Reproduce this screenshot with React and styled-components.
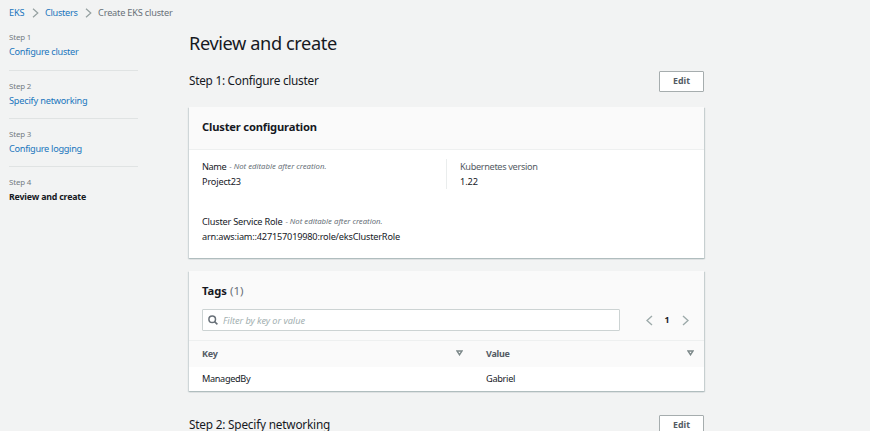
import React from 'react';
import styled, { createGlobalStyle } from 'styled-components';

const Global = createGlobalStyle`
  * { box-sizing: border-box; }
  html, body { margin: 0; background: #f2f3f3; overflow: hidden; }
  body { font-family: "Noto Sans", "Open Sans", sans-serif; font-size: 9px; color: #16191f; }
  a { text-decoration: none; }
`;

const Page = styled.div`
  height: 431px;
  overflow: hidden;
`;

const Text = styled.span`
  display: block;
  white-space: nowrap;
  font-size: ${(p) => p.$size || 9.2}px;
  line-height: ${(p) => p.$line || 15}px;
  letter-spacing: ${(p) => p.$track || 0}px;
  font-weight: ${(p) => (p.$bold ? 700 : 400)};
  font-style: ${(p) => (p.$italic ? 'italic' : 'normal')};
  color: ${(p) => p.$color || '#16191f'};
`;

const Breadcrumbs = styled.nav`
  display: flex;
  align-items: center;
  height: 25px;
  padding-left: 9px;
`;

const Separator = styled.svg`
  width: 7px;
  height: 10px;
  margin: 0 6.5px 0 7px;
  fill: none;
  stroke: #95a0a0;
  stroke-width: 1.2;
`;

const Body = styled.div`
  display: flex;
  align-items: flex-start;
`;

const Sidebar = styled.ol`
  list-style: none;
  width: 129px;
  margin: 5px 0 0 9px;
  padding: 0;
`;

const StepItem = styled.li`
  height: ${(p) => (p.$first ? 41 : 48)}px;
  padding-top: ${(p) => (p.$first ? 0 : 8)}px;
  border-bottom: 1px solid ${(p) => (p.$last ? 'transparent' : '#e0e3e3')};
`;

const Main = styled.main`
  width: 515px;
  margin: 5px 0 0 51px;
`;

const Title = styled.h1`
  margin: 0;
`;

const SectionHeader = styled.div`
  display: flex;
  align-items: flex-start;
  justify-content: space-between;
  height: 21px;
  margin-top: ${(p) => p.$gap}px;
`;

const Button = styled.button`
  display: flex;
  align-items: center;
  justify-content: center;
  width: 45px;
  height: 21px;
  padding: 0;
  font-family: inherit;
  background: #fff;
  border: 1px solid #a6adae;
  border-radius: 1px;
`;

const Panel = styled.section`
  height: ${(p) => p.$height}px;
  margin-top: ${(p) => p.$gap}px;
  background: #fff;
  box-shadow: 0 1px 1px #aab7b8aa, 1px 1px 1px #aab7b888, -1px 1px 1px #aab7b866;
`;

const PanelHeader = styled.header`
  display: flex;
  align-items: center;
  height: 43px;
  padding: 0 13px 3px;
  background: #fafafa;
  border-bottom: 1px solid #eef0f0;
`;

const Fields = styled.div`
  display: grid;
  grid-template-columns: 257px 1fr;
  row-gap: 25px;
  padding-top: 9px;
`;

const Field = styled.div`
  height: 30px;
  padding-left: 13px;
  border-left: 1px solid ${(p) => (p.$divided ? '#eaeded' : 'transparent')};
  margin-left: ${(p) => (p.$divided ? 0 : -1)}px;
`;

const Inline = styled.div`
  display: flex;
  align-items: center;
  gap: 3px;
`;

const TableTop = styled.div`
  height: 70px;
  padding: 12px 13px 0;
  background: #fafafa;
  border-bottom: 1px solid #eef0f0;
`;

const FilterRow = styled.div`
  display: flex;
  align-items: center;
  margin-top: 11px;
`;

const SearchBox = styled.div`
  display: flex;
  align-items: center;
  gap: 5px;
  width: 418px;
  height: 22px;
  padding-left: 5px;
  background: #fff;
  border: 1px solid #ccd3d3;
  border-radius: 1px;
`;

const Pager = styled.div`
  display: flex;
  align-items: center;
  gap: 12px;
  margin-left: 25.5px;
`;

const Icon = styled.svg`
  display: block;
  flex: none;
  fill: none;
  stroke: ${(p) => p.$stroke};
  stroke-width: ${(p) => p.$weight};
`;

const Row = styled.div`
  display: grid;
  grid-template-columns: 284px 1fr;
  align-items: center;
  height: ${(p) => (p.$head ? 26 : 24)}px;
  padding-bottom: ${(p) => (p.$head ? 2 : 1)}px;
  background: ${(p) => (p.$head ? '#fafafa' : '#fff')};
`;

const Cell = styled.div`
  display: flex;
  align-items: center;
  justify-content: space-between;
  padding: 0 10px 0 13px;
`;

const Chevron = ({ left }) => (
  <Icon width="7" height="11" viewBox="0 0 7 11" $stroke="#9daaaa" $weight={1.4}>
    <path d={left ? 'M6 1 1 5.5 6 10' : 'M1 1 6 5.5 1 10'} />
  </Icon>
);

const SortIcon = () => (
  <Icon width="7" height="6" viewBox="0 0 7 6" $stroke="#7c8889" $weight={1.4}>
    <path d="M1 1H6L3.5 4.8Z" />
  </Icon>
);

const LINK = '#1a76bd';

const Crumb = () => (
  <Separator viewBox="0 0 7 10"><path d="M1 .8 5.8 5 1 9.2" /></Separator>
);

const STEPS = [
  ['Configure cluster', -0.28],
  ['Specify networking', -0.21],
  ['Configure logging', -0.3],
  ['Review and create', -0.18],
];

export default function App() {
  return (
    <Page>
      <Global />
      <Breadcrumbs>
        <Text as="a" $color={LINK} $track={-0.1}>EKS</Text>
        <Crumb />
        <Text as="a" $color={LINK} $track={-0.3}>Clusters</Text>
        <Crumb />
        <Text $color="#687078" $track={-0.2}>Create EKS cluster</Text>
      </Breadcrumbs>
      <Body>
        <Sidebar>
          {STEPS.map(([name, track], i) => (
            <StepItem key={name} $first={i === 0} $last={i === 3}>
              <Text $size={7.9} $line={14} $track={-0.15} $color="#737b82">Step {i + 1}</Text>
              {i === 3
                ? <Text $bold $line={16} $size={8.8} $track={track}>{name}</Text>
                : <Text as="a" $line={16} $color={LINK} $track={track}>{name}</Text>}
            </StepItem>
          ))}
        </Sidebar>
        <Main>
          <Title><Text $size={18.2} $line={26} $track={-0.4}>Review and create</Text></Title>
          <SectionHeader $gap={15}>
            <Text $size={11.8} $line={19} $track={-0.26}>Step 1: Configure cluster</Text>
            <Button><Text $bold $size={8.8} $color="#545b64">Edit</Text></Button>
          </SectionHeader>
          <Panel $height={151} $gap={15}>
            <PanelHeader><Text $bold $size={11.2} $track={-0.19}>Cluster configuration</Text></PanelHeader>
            <Fields>
              <Field>
                <Inline>
                  <Text $track={-0.4}>Name</Text>
                  <Text $italic $size={7.75} $color="#687078">- Not editable after creation.</Text>
                </Inline>
                <Text $track={-0.18}>Project23</Text>
              </Field>
              <Field $divided>
                <Text $track={-0.35} $color="#545b64">Kubernetes version</Text>
                <Text $track={-0.1}>1.22</Text>
              </Field>
              <Field>
                <Inline>
                  <Text $track={-0.22}>Cluster Service Role</Text>
                  <Text $italic $size={7.75} $color="#687078">- Not editable after creation.</Text>
                </Inline>
                <Text $track={-0.2}>arn:aws:iam::427157019980:role/eksClusterRole</Text>
              </Field>
            </Fields>
          </Panel>
          <Panel $height={120} $gap={13}>
            <TableTop>
              <Inline>
                <Text $bold $size={11.2}>Tags</Text>
                <Text $size={11.6} $color="#687078">(1)</Text>
              </Inline>
              <FilterRow>
                <SearchBox>
                  <Icon width="10" height="10" viewBox="0 0 10 10" $stroke="#687078" $weight={1.5}>
                    <circle cx="4.2" cy="4.2" r="3.3" />
                    <path d="M6.6 6.6 9.4 9.4" />
                  </Icon>
                  <Text $italic $track={-0.05} $color="#a3b0b1">Filter by key or value</Text>
                </SearchBox>
                <Pager>
                  <Chevron left />
                  <Text $bold $size={8.8}>1</Text>
                  <Chevron />
                </Pager>
              </FilterRow>
            </TableTop>
            <Row $head>
              <Cell><Text $bold $size={9} $track={-0.25} $color="#545b64">Key</Text><SortIcon /></Cell>
              <Cell><Text $bold $size={9} $track={-0.28} $color="#545b64">Value</Text><SortIcon /></Cell>
            </Row>
            <Row>
              <Cell><Text $track={-0.36}>ManagedBy</Text></Cell>
              <Cell><Text $track={-0.3}>Gabriel</Text></Cell>
            </Row>
          </Panel>
          <SectionHeader $gap={24}>
            <Text $size={11.8} $line={19} $track={-0.2}>Step 2: Specify networking</Text>
            <Button><Text $bold $size={8.8} $color="#545b64">Edit</Text></Button>
          </SectionHeader>
        </Main>
      </Body>
    </Page>
  );
}
